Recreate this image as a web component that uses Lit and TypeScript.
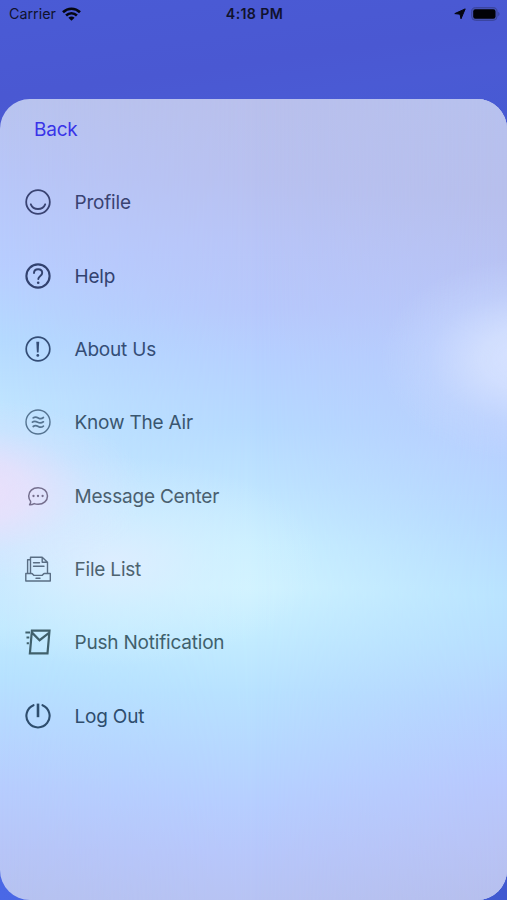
import { LitElement, html, css, svg } from "lit";
import { customElement } from "lit/decorators.js";

const items = [
  { label: "Profile", tone: "t1", icon: svg`<circle cx="13" cy="13" r="11.8" stroke-width="1.8"/><path d="M5.800 15.300c1.200 3 4 4.700 7.200 4.700s6-1.700 7.200-4.700" stroke-width="1.800"/>` },
  { label: "Help", tone: "t2", icon: svg`<circle cx="13" cy="13" r="11.600" stroke-width="2.100"/><path d="M9 10.100c0-2.400 1.800-3.900 4.100-3.900s4.100 1.500 4.100 3.700c0 3-3.900 3-3.900 6.200" stroke-width="1.900"/><circle class="solid" cx="13.200" cy="19.700" r="1.300"/>` },
  { label: "About Us", tone: "t3", icon: svg`<circle cx="13" cy="13" r="11.800" stroke-width="1.700"/><path class="solid" d="M11.300 5.800h2.900l-.6 10.800h-1.700z"/><circle class="solid" cx="12.800" cy="19.400" r="1.400"/>` },
  { label: "Know The Air", tone: "t4", icon: svg`<circle cx="13" cy="13" r="12" stroke-width="1.400"/><path stroke-width="1.700" d="M8.200 8.900c1.800-1.500 3.400-1 5.100 0s3.400 1 5.100-.4M7.400 13.200c1.800-1.500 3.400-1 5.300 0s3.600 1 5.700-.4M8.200 17.500c1.800-1.500 3.400-1 5.100 0s3.400 1 5.100-.4"/>` },
  { label: "Message Center", tone: "t5", icon: svg`<path stroke-width="1.500" d="M4.600 21.700c1-1.300 1.300-2.200 1-3.500-1.400-1.500-1.900-3.200-1.900-5.200 0-4.800 3.900-8.200 9.400-8.200s9.400 3.500 9.400 8.200-3.900 8.300-9.400 8.300c-1.400 0-2.700-.2-3.900-.7-1.400.8-2.900 1.200-4.600 1.100z"/><circle class="solid" cx="8.500" cy="13" r="1.150"/><circle class="solid" cx="13" cy="13" r="1.150"/><circle class="solid" cx="17.600" cy="13" r="1.150"/>` },
  { label: "File List", tone: "t6", icon: svg`<path stroke-width="1.400" d="M.8 17.500h5.700c1.500 0 1.500 1.900 3 1.900h7c1.500 0 1.500-1.900 3-1.900h5.800v7.500H.8zM2.600 17.300V3.800h2.900M5.500 17.300V1.200h11.700l5.300 5v11.100M17.200 1.200v5h5.300M8.500 6.800h6M8.500 10.200h10.500M11 22.200h4"/>` },
  { label: "Push Notification", tone: "t7", icon: svg`<path stroke-width="2.200" stroke-linejoin="miter" d="M6.900 1.600h17.600l-2 22.700H4.900zM7 3.600l7.600 7.600 9.400-7.300"/><path stroke-width="2" stroke-linecap="butt" d="M.4 3.400h4.600M1.500 8.600h2.800M1.700 14.200h2.200"/>` },
  { label: "Log Out", tone: "t8", icon: svg`<path stroke-width="2.100" d="M8.500 2.200a11.600 11.600 0 1 0 9 0"/><path stroke-width="2.600" stroke-linecap="butt" d="M13 .6v13.600"/>` },
];

@customElement("app-root")
export class AppRoot extends LitElement {
  static styles = css`
    :host {
      display: flex;
      flex-direction: column;
      box-sizing: border-box;
      height: 900px;
      font-family: Inter, "Liberation Sans", sans-serif;
      background:
        linear-gradient(172deg, #4a5bd5 0, #4a58d2 10%, #4a5ad4 14%, transparent 30%),
        linear-gradient(90deg, #4a68e6, #4059d0);
    }
    .status {
      display: grid;
      grid-template-columns: 1fr auto 1fr;
      align-items: center;
      height: 27px;
      padding: 0 7px 0 9px;
      color: #10122d;
      font-size: 14.3px;
    }
    .status svg { display: block; }
    .side { display: flex; align-items: center; gap: 6px; }
    .end { justify-content: flex-end; gap: 5px; }
    .time { font-weight: 600; font-size: 14.2px; letter-spacing: 0.35px; }
    .card {
      position: relative;
      flex: 1;
      margin-top: 71.500px;
      border-radius: 30px;
      overflow: hidden;
      background: linear-gradient(#b9c4ef 0, #b8c6f8 9%, #b8ceff 21%, #b5daff 30%, #bfe4ff 38%, #c2e4ff 57%, #bfe9ff 66%, #b7e2ff 72%, #b6d8ff 78%, #b7cdfe 86%, #b7c5f7 94%, #b6c2f0);
    }
    .layer { position: absolute; inset: 0; }
    .middle {
      background: linear-gradient(#b9c0ec 0, #b8c1f0 10%, #b8c5f8 18%, #b7c8fc 26%, #b6d0ff 32%, #b6daff 41%, #bfe5ff 49%, #c9f0ff 56%, #cff3ff 61%, #c3ecff 67%, #b8e2ff 74%, #b6d8ff 81%, #b6ceff 88%, #b7c7fb 94%, #b7c3f3);
      mask-image: linear-gradient(90deg, transparent, rgba(0,0,0,.5) 22%, #000 50%);
    }
    .right {
      background: linear-gradient(#b7c1ee 0, #b7bfec 12%, #b8c3f4 21%, #b8cafc 31%, #b8d0ff 43%, #b6d8ff 52%, #b9e3ff 62%, #b7deff 68%, #b6d2ff 76%, #b8c8fe 85%, #b8c3f5 93%, #b6bfed);
      mask-image: linear-gradient(90deg, transparent 50%, #000);
    }
    .glow {
      background:
        radial-gradient(ellipse 140px 100px at 521px 260px, rgba(217,228,255,.92), rgba(215,227,255,.8) 28%, rgba(208,223,255,.3) 65%, rgba(205,221,255,0)),
        radial-gradient(ellipse 175px 92px at -30px 392px, rgba(240,222,250,.92), rgba(237,224,251,.76) 34%, rgba(226,228,254,.3) 68%, rgba(220,230,255,0)),
        radial-gradient(ellipse 210px 105px at 112px 462px, rgba(227,238,255,.78), rgba(219,241,255,.45) 45%, rgba(214,242,255,0));
    }
    .content { position: relative; }
    .back {
      display: flex;
      align-items: center;
      height: 61px;
      padding-left: 34px;
      color: #3933e8;
      font-size: 19px;
      letter-spacing: -0.2px;
    }
    .list { margin-top: 6.200px; }
    .row {
      display: flex;
      align-items: center;
      gap: 24px;
      height: 73.330px;
      padding-left: 24.500px;
      font-size: 19px;
      letter-spacing: -0.2px;
    }
    .row svg {
      width: 26px;
      height: 26px;
      fill: none;
      stroke: currentColor;
      stroke-linecap: round;
      stroke-linejoin: round;
    }
    .row span { padding-top: 1px; }
    .row .solid { fill: currentColor; stroke: none; }
    .t1 { color: #394372; }
    .t2 { color: #32426f; }
    .t3 { color: #344d76; }
    .t4 { color: #3a566f; }
    .t5 { color: #4a606f; }
    .t6 { color: #4d6370; }
    .t7 { color: #40606c; }
    .t8 { color: #2e4d6d; }
    .t4 svg { color: #557391; }
    .t5 svg { color: #756f8e; }
    .t6 svg { color: #5a6e84; }
  `;

  render() {
    return html`
      <div class="status">
        <div class="side">
          <span>Carrier</span>
          <svg width="19" height="14" viewBox="0 0 19 14" fill="none" stroke="#050611" stroke-width="2.600">
            <path d="M1 5.200c4.800-4.700 12.200-4.700 17 0M4.100 8.500c3.100-3 7.700-3 10.800 0"/>
            <path d="M6.400 10.700c1.700-1.700 4.500-1.700 6.200 0L9.500 13.800z" fill="#050611" stroke="none"/>
          </svg>
        </div>
        <span class="time">4:18 PM</span>
        <div class="side end">
          <svg width="12" height="12" viewBox="0 0 12 12"><path d="M11.200.9 7 10.800 6 6.200.8 5.600z" fill="#050611" stroke="#050611" stroke-linejoin="round"/></svg>
          <svg width="29" height="14" viewBox="0 0 29 14">
            <rect x=".6" y=".6" width="25.500" height="12.800" rx="4" fill="#4753b5" stroke="#3a449d"/>
            <rect x="2.200" y="2.300" width="22.300" height="9.400" rx="2.200" fill="#020207"/>
            <path d="M27.200 4.800c1.800.7 1.800 3.700 0 4.400z" fill="#3a449d"/>
          </svg>
        </div>
      </div>
      <main class="card">
        <div class="layer middle"></div>
        <div class="layer right"></div>
        <div class="layer glow"></div>
        <div class="content">
          <div class="back">Back</div>
          <nav class="list">
            ${items.map((i) => html`<div class="row ${i.tone}"><svg viewBox="0 0 26 26">${i.icon}</svg><span>${i.label}</span></div>`)}
          </nav>
        </div>
      </main>
    `;
  }
}
